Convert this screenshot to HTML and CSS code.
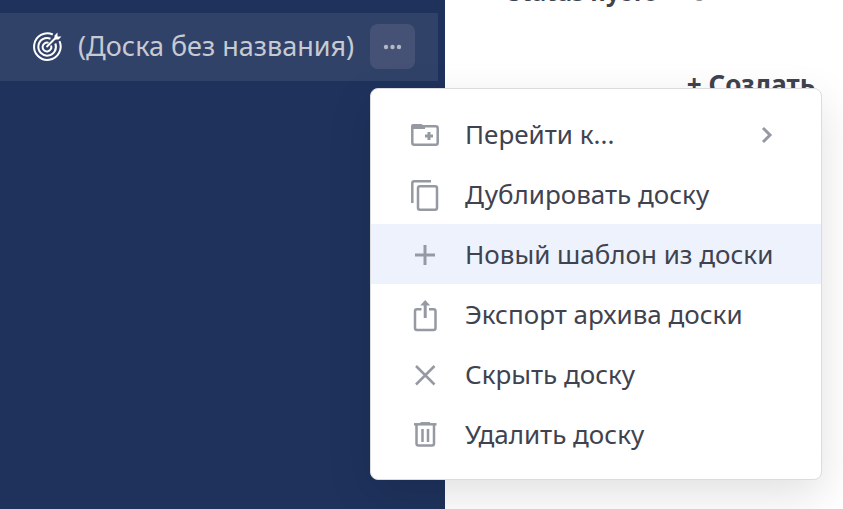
FILE: index.html
```html
<!DOCTYPE html>
<html lang="ru">

<head>
    <meta charset="UTF-8">
    <meta name="viewport" content="width=device-width, initial-scale=1.0">
    <title>Доски</title>
    <link rel="stylesheet" href="styles.css">
</head>

<body>
    <div class="app">
        <aside class="sidebar">
            <div class="board-item">
                <svg class="board-icon" viewBox="0 -1 30 30" fill="none" stroke="currentColor" stroke-width="2">
                    <path d="M20.8 2.5A13.3 13.3 0 1 0 27.5 9.2" />
                    <path d="M18.5 6.7A8.8 8.8 0 1 0 23.3 11.5" />
                    <path d="M16.5 10.9A4.4 4.4 0 1 0 19.1 13.5" />
                    <path d="M14.5 15L24.5 5" />
                    <path d="M22.5 7.5V3.5L25.5 0.5V4.5H29.5L26.5 7.5Z" stroke="none" fill="currentColor" />
                </svg>
                <a class="board-title" href="#">(Доска без названия)</a>
                <div class="menu-wrapper">
                    <button class="options-button" type="button" aria-label="Параметры доски">
                        <svg viewBox="0 -1 20 6" fill="currentColor">
                            <circle cx="3" cy="3" r="2.2" />
                            <circle cx="9.5" cy="3" r="2.2" />
                            <circle cx="16" cy="3" r="2.2" />
                        </svg>
                    </button>

                    <!-- Меню доски -->
                    <div class="menu">
                        <button class="menu-item" type="button">
                            <svg class="menu-icon" viewBox="0 -1 30 30" fill="none" stroke="currentColor" stroke-width="2.5">
                                <rect x="2.3" y="6.3" width="25.4" height="18.4" rx="2" />
                                <path d="M1 9V6Q1 4 3 4H11.5L15 7V9Z" fill="currentColor" stroke="none" />
                                <path d="M19 12V20M15 16H23" stroke-width="3" />
                            </svg>
                            <span class="menu-text">Перейти к...</span>
                            <svg class="chevron" viewBox="0 -1 12 18" fill="none" stroke="currentColor" stroke-width="3">
                                <path d="M2 2L9 9L2 16" />
                            </svg>
                        </button>
                        <button class="menu-item" type="button">
                            <svg class="menu-icon" viewBox="0 -1 30 30" fill="none" stroke="currentColor" stroke-width="2.5">
                                <rect x="8" y="6.3" width="19" height="23.4" rx="2" />
                                <path d="M2.3 23V3.3Q2.3 1.3 4.3 1.3H21" />
                            </svg>
                            <span class="menu-text">Дублировать доску</span>
                        </button>
                        <button class="menu-item active" type="button">
                            <svg class="menu-icon" viewBox="0 -1 30 30" fill="none" stroke="currentColor" stroke-width="3">
                                <path d="M15 5V25M5 15H25" />
                            </svg>
                            <span class="menu-text">Новый шаблон из доски</span>
                        </button>
                        <button class="menu-item" type="button">
                            <svg class="menu-icon" viewBox="0 -1 30 30" fill="none" stroke="currentColor" stroke-width="2.5">
                                <path d="M11.5 9.3H7Q5 9.3 5 11.3V28Q5 30 7 30H23.5Q25.5 30 25.5 28V11.3Q25.5 9.3 23.5 9.3H19" />
                                <path d="M15.2 4V18" stroke-width="3" />
                                <path d="M15.2 0L20.2 5.5H10.2Z" fill="currentColor" stroke="none" />
                            </svg>
                            <span class="menu-text">Экспорт архива доски</span>
                        </button>
                        <button class="menu-item" type="button">
                            <svg class="menu-icon" viewBox="0 -1 30 30" fill="none" stroke="currentColor" stroke-width="2.5">
                                <path d="M6 6L24.5 24.5M24.5 6L6 24.5" />
                            </svg>
                            <span class="menu-text">Скрыть доску</span>
                        </button>
                        <button class="menu-item" type="button">
                            <svg class="menu-icon" viewBox="0 -1 30 30" fill="none" stroke="currentColor" stroke-width="2.5">
                                <path d="M4 4.3H26.5" />
                                <path d="M10.5 3.3H20" />
                                <path d="M6.5 4.3V23.5Q6.5 25.5 8.5 25.5H22Q24 25.5 24 23.5V4.3" />
                                <path d="M12.5 9V22M18 9V22" />
                            </svg>
                            <span class="menu-text">Удалить доску</span>
                        </button>
                    </div>
                </div>
            </div>
        </aside>

        <main class="board">
            <div class="column-header">
                <span class="column-name">Status пусто</span>
                <span class="column-count">0</span>
            </div>
            <button class="create-button" type="button">+ Создать</button>
        </main>
    </div>
</body>

</html>
```
FILE: styles.css
```css
* {
    box-sizing: border-box;
}

body {
    margin: 0;
    font-family: "Noto Sans", "Open Sans", sans-serif;
    color: #3f4350;
    background-color: white;
}

button {
    font-family: inherit;
    border: none;
    cursor: pointer;
}

.app {
    display: flex;
    height: 100vh;
    overflow: hidden;
}

.sidebar {
    flex: 0 0 445px;
    padding: 13px 7px 0 0;
    background-color: #1e325c;
}

.board-item {
    display: flex;
    align-items: center;
    height: 68px;
    padding: 0 23px 2px 32px;
    background-color: #314269;
}

.board-icon {
    width: 30px;
    height: 30px;
    overflow: visible;
    color: white;
}

.board-title {
    flex: 1;
    margin-left: 16px;
    font-size: 27px;
    line-height: 36px;
    white-space: nowrap;
    color: #c7cad2;
    text-decoration: none;
}

.menu-wrapper {
    position: relative;
}

.options-button {
    display: flex;
    align-items: center;
    justify-content: center;
    width: 45px;
    height: 45px;
    padding: 0;
    border-radius: 8px;
    color: #b4b8c2;
    background-color: #455275;
}

.options-button svg {
    width: 20px;
    height: 6px;
    overflow: visible;
}

.menu {
    position: absolute;
    top: 64px;
    left: 0;
    z-index: 10;
    width: 452px;
    padding: 15px 0;
    border: 1px solid #dcdcde;
    border-radius: 8px;
    background-color: white;
    box-shadow: 0 15px 45px rgba(0, 0, 0, 0.12);
}

.menu-item {
    display: flex;
    align-items: center;
    width: 100%;
    height: 60px;
    padding: 0 48px 0 39px;
    color: #3f4350;
    font-size: 26px;
    text-align: left;
    background-color: transparent;
}

.menu-item.active {
    background-color: #edf2fd;
}

.menu-icon {
    flex: none;
    width: 30px;
    height: 30px;
    overflow: visible;
    color: #9599a2;
}

.menu-text {
    flex: 1;
    margin-left: 25px;
    line-height: 36px;
    white-space: nowrap;
}

.chevron {
    width: 12px;
    height: 18px;
    overflow: visible;
    color: #9599a2;
}

.board {
    flex: 1;
    display: flex;
    flex-direction: column;
    /* колонка прокручена вверх */
    margin-top: -24px;
    padding: 0 28px 0 63px;
}

.column-header {
    display: flex;
    gap: 34px;
    font-size: 24px;
    line-height: 32px;
}

.column-name {
    font-weight: bold;
}

.column-count {
    color: #8f8f8f;
}

.create-button {
    align-self: flex-end;
    margin-top: 60px;
    padding: 0;
    color: #3f4350;
    font-size: 26px;
    font-weight: bold;
    line-height: 32px;
    background-color: transparent;
}
```
